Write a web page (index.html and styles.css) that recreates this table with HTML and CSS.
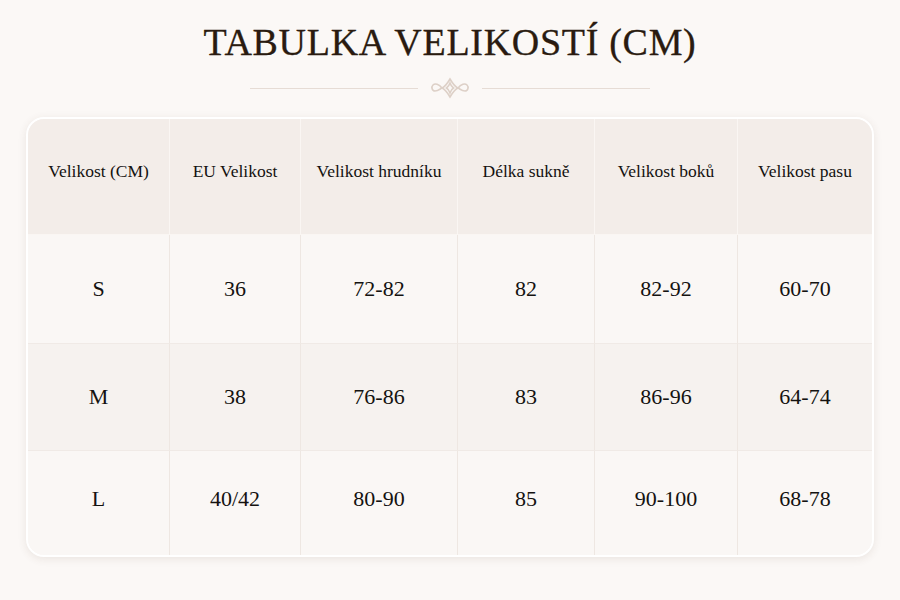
FILE: index.html
```html
<!DOCTYPE html>
<html lang="cs">
<head>
<meta charset="utf-8">
<title>Tabulka velikostí</title>
<link rel="stylesheet" href="styles.css">
</head>
<body>
<div class="page">
  <h1 class="title">TABULKA VELIKOSTÍ (CM)</h1>
  <div class="divider">
    <span class="line"></span>
    <svg class="orn" width="44" height="22" viewBox="0 0 44 22" fill="none" stroke="#ddd0c7" stroke-width="1.6">
      <path d="M22 2 C19 7 17 10 14 11 C17 12 19 15 22 20 C25 15 27 12 30 11 C27 10 25 7 22 2 Z"/>
      <path d="M22 6 C21 9 20 10 18.5 11 C20 12 21 13 22 16 C23 13 24 12 25.5 11 C24 10 23 9 22 6 Z"/>
      <path d="M14 11 C11 7 7 6 5 8 C3 10 4 14 7 14 C10 14 12 12 14 11"/>
      <path d="M30 11 C33 7 37 6 39 8 C41 10 40 14 37 14 C34 14 32 12 30 11"/>
    </svg>
    <span class="line"></span>
  </div>
  <div class="card">
    <div class="grid">
      <div class="cell head">Velikost (CM)</div>
      <div class="cell head">EU Velikost</div>
      <div class="cell head">Velikost hrudníku</div>
      <div class="cell head">Délka sukně</div>
      <div class="cell head">Velikost boků</div>
      <div class="cell head last">Velikost pasu</div>

      <div class="cell row1">S</div>
      <div class="cell row1">36</div>
      <div class="cell row1">72-82</div>
      <div class="cell row1">82</div>
      <div class="cell row1">82-92</div>
      <div class="cell row1 last">60-70</div>

      <div class="cell row2">M</div>
      <div class="cell row2">38</div>
      <div class="cell row2">76-86</div>
      <div class="cell row2">83</div>
      <div class="cell row2">86-96</div>
      <div class="cell row2 last">64-74</div>

      <div class="cell row3">L</div>
      <div class="cell row3">40/42</div>
      <div class="cell row3">80-90</div>
      <div class="cell row3">85</div>
      <div class="cell row3">90-100</div>
      <div class="cell row3 last">68-78</div>
    </div>
  </div>
</div>
</body>
</html>
```
FILE: styles.css
```css
html, body {
  margin: 0;
  padding: 0;
  background: #fbf8f6;
}
body {
  width: 900px;
  height: 600px;
  overflow: hidden;
  font-family: "Liberation Serif", "DejaVu Serif", serif;
  color: #141210;
}
.page {
  display: flex;
  flex-direction: column;
  align-items: center;
  padding-top: 18px;
}
.title {
  margin: 0;
  font-size: 38px;
  font-weight: normal;
  line-height: 48px;
  color: #2a1b10;
  letter-spacing: 0.7px;
  -webkit-text-stroke: 0.3px #2a1b10;
}
.divider {
  display: flex;
  align-items: center;
  gap: 10px;
  margin-top: 11px;
  height: 22px;
}
.line {
  display: block;
  width: 168px;
  height: 1px;
  background: #e6dcd5;
}
.orn {
  display: block;
}
.card {
  margin-top: 18px;
  width: 844px;
  border: 2px solid #ffffff;
  border-radius: 18px;
  overflow: hidden;
  box-shadow: 0 2px 8px rgba(90, 60, 40, 0.10);
  background: #faf7f5;
}
.grid {
  display: grid;
  grid-template-columns: 142px 131px 157px 137px 143px 134px;
  grid-template-rows: 116px 108px 108px 104px;
}
.cell {
  display: flex;
  align-items: center;
  justify-content: center;
  font-size: 22px;
  border-right: 1px solid #eee7e2;
}
.cell.last {
  border-right: none;
}
.head {
  background: #f3ede9;
  font-size: 17.5px;
  padding-bottom: 10px;
  border-right: 1px solid #faf6f3;
  border-bottom: 1px solid #faf6f3;
}
.row1 { background: #faf7f5; }
.row2 {
  background: #f6f2ef;
  border-top: 1px solid #f0eae6;
  border-bottom: 1px solid #f0eae6;
}
.row3 {
  background: #faf7f5;
  padding-bottom: 8px;
}
```
